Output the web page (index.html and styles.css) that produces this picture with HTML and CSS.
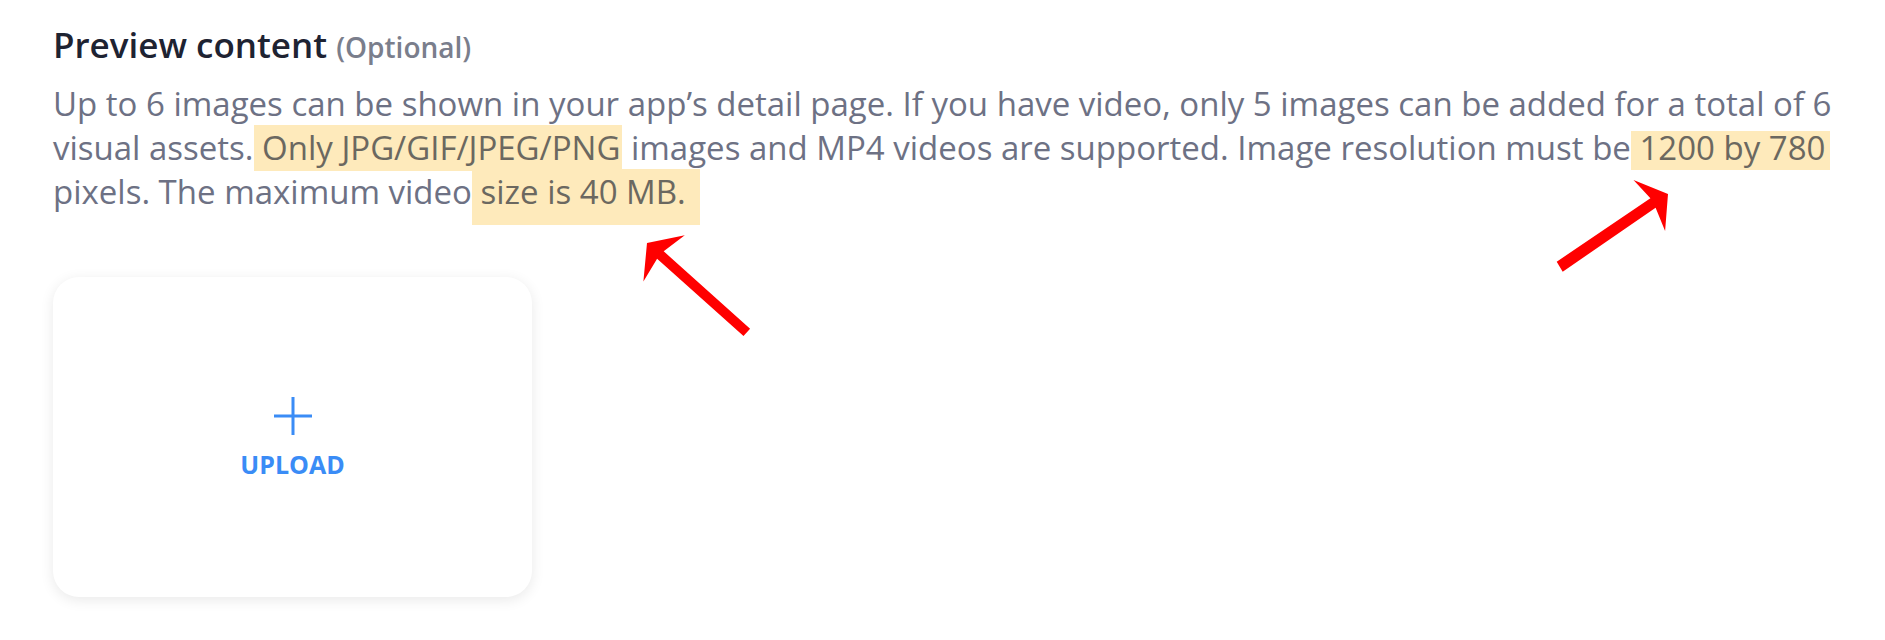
FILE: index.html
```html
<!DOCTYPE html>
<html>
<head>
  <meta charset="UTF-8">
  <meta name="viewport" content="width=device-width, initial-scale=1.0">
  <title>Preview content</title>
  <link rel="stylesheet" href="styles.css">
</head>
<body>
  <div class="root">
    <section class="preview">
      <h3 class="preview-title">Preview content <span class="optional">(Optional)</span></h3>
      <p class="preview-desc">Up to 6 images can be shown in your app’s detail page. If you have video, only 5 images can be added for a total of 6 visual assets.<span class="mark mark-types"> Only JPG/GIF/JPEG/PNG</span> images and MP4 videos are supported. Image resolution must be<span class="mark mark-res"> 1200 by 780</span> pixels. The maximum video<span class="mark mark-size"> size is 40 MB.</span></p>
      <div class="upload-list">
        <button class="upload-card" type="button">
          <svg class="upload-plus" width="38" height="38" viewBox="0 0 38 38">
            <path d="M19 0v38M0 19h38" stroke="currentColor" stroke-width="3" fill="none"/>
          </svg>
          <span class="upload-label">UPLOAD</span>
        </button>
      </div>
    </section>
    <!-- red arrows drawn over the screenshot as annotations -->
    <svg class="annotations" width="1885" height="640" viewBox="0 0 1885 640">
      <polygon fill="#ff0000" points="647,243 684.8,235.2 663.7,251.3 750.1,328.7 743.5,336.1 657.1,258.7 643.4,281.4"/>
      <polygon fill="#ff0000" points="1668,194 1665.1,231.1 1655.6,207.8 1562.7,271.7 1556.7,261.7 1650.4,198.3 1633.5,180.1"/>
    </svg>
  </div>
</body>
</html>
```

FILE: styles.css
```css
* {
  margin: 0;
  padding: 0;
  box-sizing: border-box;
}
body {
  background-color: #fff;
  font-family: "Open Sans", "Noto Sans", sans-serif;
}
div.root {
  position: relative;
  width: 1885px;
  height: 640px;
  overflow: hidden;
}
section.preview {
  padding: 23px 0 0 53px;
}
h3.preview-title {
  color: #1e2332;
  font-size: 35px;
  font-weight: 600;
  line-height: 44px;
}
span.optional {
  color: #7a7e8c;
  font-size: 28px;
  font-weight: 600;
}
p.preview-desc {
  width: 1810px;
  margin-top: 13px;
  color: #6d7184;
  font-size: 33px;
  line-height: 44px;
}
span.mark {
  background-color: #feeabb;
  color: #6b6860;
}
span.mark-types {
  padding: 0 2px 1px 0;
}
span.mark-res {
  padding: 0 5px 0 0;
  background: linear-gradient(transparent 6px, #feeabb 6px);
}
span.mark-size {
  padding: 0 14px 11px 0;
}
div.upload-list {
  display: flex;
  margin-top: 63px;
}
button.upload-card {
  width: 479px;
  height: 320px;
  border: none;
  border-radius: 26px;
  background-color: #fff;
  box-shadow: 0 3px 14px rgba(0, 0, 0, 0.09);
  display: flex;
  flex-direction: column;
  align-items: center;
  justify-content: center;
  gap: 17px;
  color: #3a8cf6;
  font-family: inherit;
  cursor: pointer;
}
span.upload-label {
  font-size: 25px;
  font-weight: 700;
  line-height: 25px;
}
svg.annotations {
  position: absolute;
  top: 0;
  left: 0;
  pointer-events: none;
}
```
